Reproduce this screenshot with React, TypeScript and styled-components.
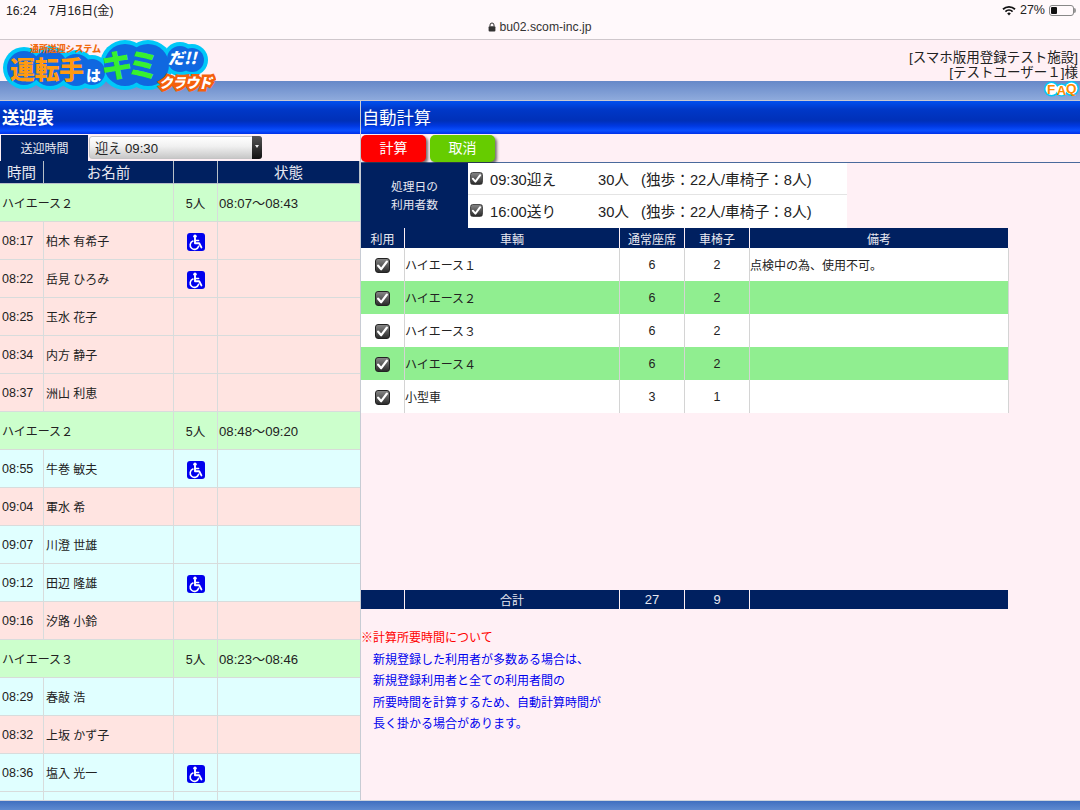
import React from "react";
import styled, { createGlobalStyle } from "styled-components";

const FONT = `"Liberation Sans", "Noto Sans CJK JP", sans-serif`;

const GlobalStyle = createGlobalStyle`
  html, body {
    margin: 0;
    padding: 0;
    background: #fff0f5;
  }
  * {
    box-sizing: border-box;
  }
`;

type Row =
  | { kind: "group"; name: string; count: string; range: string }
  | { kind: "person"; time: string; name: string; chair?: boolean; tone: "pink" | "cyan" };

const ROWS: Row[] = [
  { kind: "group", name: "ハイエース２", count: "5人", range: "08:07～08:43" },
  { kind: "person", time: "08:17", name: "柏木 有希子", chair: true, tone: "pink" },
  { kind: "person", time: "08:22", name: "岳見 ひろみ", chair: true, tone: "pink" },
  { kind: "person", time: "08:25", name: "玉水 花子", tone: "pink" },
  { kind: "person", time: "08:34", name: "内方 静子", tone: "pink" },
  { kind: "person", time: "08:37", name: "洲山 利恵", tone: "pink" },
  { kind: "group", name: "ハイエース２", count: "5人", range: "08:48～09:20" },
  { kind: "person", time: "08:55", name: "牛巻 敏夫", chair: true, tone: "cyan" },
  { kind: "person", time: "09:04", name: "軍水 希", tone: "pink" },
  { kind: "person", time: "09:07", name: "川澄 世雄", tone: "cyan" },
  { kind: "person", time: "09:12", name: "田辺 隆雄", chair: true, tone: "cyan" },
  { kind: "person", time: "09:16", name: "汐路 小鈴", tone: "pink" },
  { kind: "group", name: "ハイエース３", count: "5人", range: "08:23～08:46" },
  { kind: "person", time: "08:29", name: "春敲 浩", tone: "cyan" },
  { kind: "person", time: "08:32", name: "上坂 かず子", tone: "pink" },
  { kind: "person", time: "08:36", name: "塩入 光一", chair: true, tone: "cyan" },
  { kind: "person", time: "", name: "", tone: "cyan" },
];

const CARS = [
  { name: "ハイエース１", seats: 6, chairs: 2, note: "点検中の為、使用不可。", green: false },
  { name: "ハイエース２", seats: 6, chairs: 2, note: "", green: true },
  { name: "ハイエース３", seats: 6, chairs: 2, note: "", green: false },
  { name: "ハイエース４", seats: 6, chairs: 2, note: "", green: true },
  { name: "小型車", seats: 3, chairs: 1, note: "", green: false },
];

const NOTES = [
  "新規登録した利用者が多数ある場合は、",
  "新規登録利用者と全ての利用者間の",
  "所要時間を計算するため、自動計算時間が",
  "長く掛かる場合があります。",
];

function WifiIcon() {
  return (
    <svg width="14" height="11" viewBox="0 0 14 11">
      <path d="M0.4 3.6a9.4 9.4 0 0 1 13.2 0l-1.2 1.3a7.7 7.7 0 0 0-10.8 0z" fill="#111" />
      <path d="M2.8 6a6 6 0 0 1 8.4 0l-1.2 1.3a4.3 4.3 0 0 0-6 0z" fill="#111" />
      <path d="M5.2 8.4a2.6 2.6 0 0 1 3.6 0L7 10.5z" fill="#111" />
    </svg>
  );
}

function ChairIcon() {
  return (
    <ChairBox>
      <svg width="18" height="18" viewBox="0 0 18 18">
        <rect width="18" height="18" rx="3" fill="#0000ee" />
        <circle cx="8" cy="3.2" r="1.7" fill="#fff" />
        <path d="M8 5v5.2h4.2l2.2 4.2" fill="none" stroke="#fff" strokeWidth="1.9" strokeLinecap="round" strokeLinejoin="round" />
        <path d="M8 7.6h3.6" fill="none" stroke="#fff" strokeWidth="1.5" strokeLinecap="round" />
        <path d="M5.9 8.1a4.3 4.3 0 1 0 5.7 5.2" fill="none" stroke="#fff" strokeWidth="1.6" strokeLinecap="round" />
      </svg>
    </ChairBox>
  );
}

function Logo() {
  const bumps: [number, number, number][] = [
    [22, 28, 21], [48, 28, 22], [74, 30, 20], [90, 32, 17], [123, 25, 25], [146, 25, 25], [178, 19, 17], [190, 20, 16],
  ];
  const t = { fontFamily: `"Noto Sans CJK JP", sans-serif`, fontWeight: 900 };
  return (
    <LogoWrap>
      <svg width="214" height="54" viewBox="0 0 214 54">
        {bumps.map(([x, y, r], i) => <circle key={i} cx={x} cy={y} r={r} fill="#00c8f8" />)}
        {bumps.map(([x, y, r], i) => <circle key={i} cx={x} cy={y} r={r - 4} fill="#1068e0" />)}
        <text x="28" y="12" fontSize="9" fill="#f06a10" style={t} textLength="71">通所送迎システム</text>
        <text x="8" y="39" fontSize="25" fill="#ff9a10" style={t} textLength="74">運転手</text>
        <text x="84" y="41" fontSize="15" fill="#fff" style={t}>は</text>
        <text x="99" y="37" fontSize="32" fill="#38f030" style={t} textLength="58">キミ</text>
        <text x="166" y="24" fontSize="16" fontStyle="italic" fill="#fff" style={t}>だ!!</text>
        <text x="157" y="48" fontSize="14" fontStyle="italic" fill="#fff" stroke="#f4600c" strokeWidth="5" paintOrder="stroke" style={t} textLength="53">クラウド</text>
      </svg>
    </LogoWrap>
  );
}

function FaqIcon() {
  return (
    <FaqWrap>
      <svg width="35" height="16" viewBox="0 0 35 16">
        <circle cx="7.5" cy="8" r="7.5" fill="#00c8f8" />
        <circle cx="17.5" cy="9" r="6.5" fill="#00c8f8" />
        <circle cx="27.5" cy="7.5" r="7.5" fill="#00c8f8" />
        <circle cx="7.5" cy="8" r="6" fill="#fff" />
        <circle cx="17.5" cy="9" r="5.2" fill="#fff" />
        <circle cx="27.5" cy="7.5" r="6" fill="#fff" />
        <text x="3" y="12.8" fontSize="13.5" fontWeight="700" fontFamily="Liberation Sans" fill="#ff8a00">F</text>
        <text x="12.8" y="14" fontSize="13" fontWeight="700" fontFamily="Liberation Sans" fill="#ff8a00">A</text>
        <text x="22" y="12.4" fontSize="13.5" fontWeight="700" fontFamily="Liberation Sans" fill="#ff8a00">Q</text>
      </svg>
    </FaqWrap>
  );
}

function Check() {
  return (
    <CheckBox>
      <svg width="13" height="13" viewBox="0 0 12 12">
        <path d="M2 6.2l2.8 3.2 5.2-7" fill="none" stroke="#fff" strokeWidth="2.1" strokeLinecap="round" strokeLinejoin="round" />
      </svg>
    </CheckBox>
  );
}

export default function App() {
  return (
    <Page>
      <GlobalStyle />
      <StatusBar>
        <StatusTop>
          <StatusText>
            <span>16:24</span>
            <span>7月16日(金)</span>
          </StatusText>
          <StatusRight>
            <WifiIcon />
            <span>27%</span>
            <Battery>
              <BatteryLevel />
            </Battery>
          </StatusRight>
        </StatusTop>
        <Url>
          <svg width="8" height="10" viewBox="0 0 8 10">
            <path d="M2 4.4V3a2 2 0 0 1 4 0v1.4" fill="none" stroke="#333" strokeWidth="1" />
            <rect x="0.6" y="4.2" width="6.8" height="5.4" rx="1" fill="#333" />
          </svg>
          <span>bu02.scom-inc.jp</span>
        </Url>
      </StatusBar>
      <Header>
        <UserInfo>
          <div>[スマホ版用登録テスト施設]</div>
          <div>[テストユーザー１]様</div>
        </UserInfo>
      </Header>
      <Band>
        <FaqIcon />
      </Band>
      <Logo />
      <Columns>
        <LeftPane>
          <TitleBar $bold>送迎表</TitleBar>
          <SelectRow>
            <SelectLabel>送迎時間</SelectLabel>
            <SelectBox>
              <span>迎え 09:30</span>
              <SelectArrow />
            </SelectBox>
          </SelectRow>
          <ListHead>
            <HeadCell>時間</HeadCell>
            <HeadCell>お名前</HeadCell>
            <HeadCell />
            <HeadCell>状態</HeadCell>
          </ListHead>
          <ListBody>
            {ROWS.map((row, i) =>
              row.kind === "group" ? (
                <GroupRow key={i}>
                  <GroupName>{row.name}</GroupName>
                  <MidCell>{row.count}</MidCell>
                  <StateCell>{row.range}</StateCell>
                </GroupRow>
              ) : (
                <PersonRow key={i} $tone={row.tone}>
                  <TimeCell>{row.time}</TimeCell>
                  <NameCell>{row.name}</NameCell>
                  <MidCell>{row.chair && <ChairIcon />}</MidCell>
                  <StateCell />
                </PersonRow>
              )
            )}
          </ListBody>
        </LeftPane>
        <RightPane>
          <TitleBar>自動計算</TitleBar>
          <ButtonRow>
            <ActionButton $color="#ff0000">計算</ActionButton>
            <ActionButton $color="#66cc00">取消</ActionButton>
          </ButtonRow>
          <InfoTable>
            <InfoLabel>
              処理日の
              <br />
              利用者数
            </InfoLabel>
            <InfoRows>
              <InfoRow>
                <SmallCheck>
                  <Check />
                </SmallCheck>
                <InfoTime>09:30迎え</InfoTime>
                <InfoCount>30人</InfoCount>
                <span>(独歩：22人/車椅子：8人)</span>
              </InfoRow>
              <InfoRow>
                <SmallCheck>
                  <Check />
                </SmallCheck>
                <InfoTime>16:00送り</InfoTime>
                <InfoCount>30人</InfoCount>
                <span>(独歩：22人/車椅子：8人)</span>
              </InfoRow>
            </InfoRows>
          </InfoTable>
          <CarGrid>
            <CarHead>利用</CarHead>
            <CarHead>車輌</CarHead>
            <CarHead>通常座席</CarHead>
            <CarHead>車椅子</CarHead>
            <CarHead>備考</CarHead>
          </CarGrid>
          {CARS.map((car) => (
            <CarGrid key={car.name}>
              <CarCell $green={car.green} $center>
                <CarCheck>
                  <Check />
                </CarCheck>
              </CarCell>
              <CarCell $green={car.green}>{car.name}</CarCell>
              <CarCell $green={car.green} $center $large>
                {car.seats}
              </CarCell>
              <CarCell $green={car.green} $center $large>
                {car.chairs}
              </CarCell>
              <CarCell $green={car.green}>{car.note}</CarCell>
            </CarGrid>
          ))}
          <TotalRow>
            <TotalCell />
            <TotalCell>合計</TotalCell>
            <TotalCell $large>27</TotalCell>
            <TotalCell $large>9</TotalCell>
            <TotalCell />
          </TotalRow>
          <Notes>
            <RedNote>※計算所要時間について</RedNote>
            {NOTES.map((n) => (
              <BlueNote key={n}>{n}</BlueNote>
            ))}
          </Notes>
        </RightPane>
      </Columns>
      <BottomBar />
    </Page>
  );
}

const Page = styled.div`
  display: flex;
  flex-direction: column;
  width: 1080px;
  height: 810px;
  overflow: hidden;
  position: relative;
  background: #fff0f5;
  font-family: ${FONT};
  color: #222;
`;
const StatusBar = styled.div`
  flex: none;
  height: 40px;
  padding: 3px 6px 0;
  background: #fff9fb;
  border-bottom: 1px solid #cfc8cc;
  font-size: 12.5px;
`;
const StatusTop = styled.div`
  display: flex;
  justify-content: space-between;
  align-items: center;
  height: 14px;
`;
const StatusText = styled.div`
  display: flex;
  align-items: baseline;
  gap: 12px;
  font-size: 12.2px;
  line-height: 14px;
  color: #222;
  margin-top: 1px;
`;
const StatusRight = styled.div`
  display: flex;
  align-items: center;
  gap: 4px;
`;
const Battery = styled.div`
  position: relative;
  width: 25px;
  height: 11px;
  padding: 1px;
  border: 1px solid #888;
  border-radius: 3px;
  &::after {
    content: "";
    position: absolute;
    right: -3px;
    top: 2px;
    width: 2px;
    height: 5px;
    border-radius: 0 2px 2px 0;
    background: #999;
  }
`;
const BatteryLevel = styled.div`
  width: 6px;
  height: 100%;
  background: #111;
  border-radius: 1px;
`;
const Url = styled.div`
  display: flex;
  justify-content: center;
  align-items: center;
  gap: 3px;
  margin-top: 3px;
  font-size: 12.2px;
  color: #333;
`;
const Header = styled.div`
  display: flex;
  justify-content: flex-end;
  align-items: flex-end;
  flex: none;
  height: 41px;
  padding: 0 2px 1px 0;
`;
const LogoWrap = styled.div`
  position: absolute;
  z-index: 2;
  left: 2px;
  top: 40px;
  line-height: 0;
`;
const UserInfo = styled.div`
  font-size: 13.5px;
  line-height: 15px;
  text-align: right;
  color: #222;
`;
const Band = styled.div`
  position: relative;
  height: 20px;
  flex: none;
  background: linear-gradient(#6688c8, #8eaadc);
  border-bottom: 1px solid #c8c8d0;
`;
const FaqWrap = styled.div`
  position: absolute;
  right: 1px;
  top: 0;
  line-height: 0;
`;
const Columns = styled.div`
  display: flex;
  flex: 1;
  min-height: 0;
`;
const LeftPane = styled.div`
  display: flex;
  flex-direction: column;
  width: 360px;
  flex: none;
  overflow: hidden;
`;
const RightPane = styled.div`
  display: flex;
  flex-direction: column;
  flex: 1;
  min-width: 0;
  border-left: 1px solid #c8ccd4;
`;
const TitleBar = styled.div<{ $bold?: boolean }>`
  display: flex;
  align-items: center;
  flex: none;
  height: 33px;
  padding: 0 0 2px ${(p) => (p.$bold ? "2px" : "1px")};
  font-size: 17.3px;
  font-weight: ${(p) => (p.$bold ? 700 : 400)};
  color: #fff;
  background: linear-gradient(#0050f0 0%, #0038c8 25%, #0030b8 60%, #0038e0 75%, #0a50ff 90%, #0030e8 100%);
`;
const SelectRow = styled.div`
  display: flex;
  flex: none;
  align-items: center;
  gap: 1px;
  height: 27px;
  padding-left: 1px;
`;
const SelectLabel = styled.div`
  display: flex;
  align-items: center;
  justify-content: center;
  width: 87px;
  height: 26px;
  font-size: 12px;
  color: #e8e8f0;
  background: #002060;
`;
const SelectBox = styled.div`
  position: relative;
  display: flex;
  align-items: center;
  width: 173px;
  height: 23px;
  padding-left: 5px;
  border: 1px solid #c4c4c4;
  border-radius: 3px;
  font-size: 13.2px;
  color: #222;
  background: linear-gradient(#ffffff, #f0f0f0 45%, #c8c8c8);
`;
const SelectArrow = styled.div`
  position: absolute;
  right: -1px;
  top: -1px;
  bottom: -1px;
  width: 10px;
  border-radius: 0 3px 3px 0;
  background: linear-gradient(#555, #111);
  &::after {
    content: "";
    position: absolute;
    left: 3px;
    top: 9px;
    border-left: 2px solid transparent;
    border-right: 2px solid transparent;
    border-top: 3px solid #eee;
  }
`;
const LIST_COLS = "44px 130px 44px 1fr";
const ListHead = styled.div`
  display: grid;
  flex: none;
  grid-template-columns: ${LIST_COLS};
  height: 23px;
  background: #b8c0c8;
`;
const HeadCell = styled.div`
  display: flex;
  align-items: center;
  justify-content: center;
  margin-right: 1px;
  height: 22px;
  padding-bottom: 2px;
  font-size: 14.5px;
  color: #e8e8f0;
  background: #002060;
`;
const ListBody = styled.div`
  display: flex;
  flex-direction: column;
  flex: none;
`;
const GroupRow = styled.div`
  display: grid;
  flex: none;
  grid-template-columns: 174px 44px 1fr;
  height: 38px;
  font-size: 12.5px;
  background: #ccffcc;
  border-bottom: 1px solid #d8dcd8;
`;
const PersonRow = styled.div<{ $tone: "pink" | "cyan" }>`
  display: grid;
  flex: none;
  grid-template-columns: ${LIST_COLS};
  height: 38px;
  font-size: 12.5px;
  background: ${(p) => (p.$tone === "pink" ? "#ffe4e1" : "#e0ffff")};
  border-bottom: 1px solid #d8dcdc;
`;
const GroupName = styled.div`
  display: flex;
  align-items: center;
  padding-left: 2px;
  font-size: 12px;
  border-right: 1px solid #d8dcd8;
`;
const TimeCell = styled.div`
  display: flex;
  align-items: center;
  padding-left: 2px;
  border-right: 1px solid #d8dcdc;
`;
const NameCell = styled.div`
  display: flex;
  align-items: center;
  padding-left: 2px;
  font-size: 12px;
  border-right: 1px solid #d8dcdc;
`;
const MidCell = styled.div`
  display: flex;
  align-items: center;
  justify-content: center;
  border-right: 1px solid #d8dcdc;
`;
const StateCell = styled.div`
  display: flex;
  align-items: center;
  padding-left: 1px;
  font-size: 13.2px;
`;
const ChairBox = styled.div`
  display: flex;
  margin-top: 2px;
  line-height: 0;
`;
const ButtonRow = styled.div`
  display: flex;
  flex: none;
  gap: 4px;
  height: 29px;
  padding-top: 1px;
  border-bottom: 1px solid #4a6a9c;
`;
const ActionButton = styled.button<{ $color: string }>`
  width: 65px;
  height: 27px;
  padding: 0 0 3px;
  border: none;
  border-radius: 5px;
  font-family: ${FONT};
  font-size: 14px;
  color: #fff;
  background: ${(p) => p.$color};
  box-shadow: 2px 2px 3px rgba(0, 0, 0, 0.55);
`;
const InfoTable = styled.div`
  display: flex;
  flex: none;
  width: 486px;
  height: 65px;
`;
const InfoLabel = styled.div`
  display: flex;
  align-items: center;
  justify-content: center;
  width: 107px;
  font-size: 11.7px;
  line-height: 18px;
  text-align: center;
  color: #e8e8f0;
  background: #002060;
`;
const InfoRows = styled.div`
  display: flex;
  flex-direction: column;
  flex: 1;
  background: #fff;
`;
const InfoRow = styled.div`
  display: flex;
  align-items: center;
  flex: 1;
  padding-left: 1px;
  font-size: 14.7px;
  border-bottom: 1px solid #e4e4e4;
  &:last-child {
    border-bottom: none;
    padding-bottom: 2px;
  }
`;
const SmallCheck = styled.div`
  display: flex;
  margin-right: 6px;
  transform: scale(0.85);
`;
const InfoTime = styled.span`
  width: 108px;
`;
const InfoCount = styled.span`
  width: 43px;
`;
const CAR_COLS = "44px 215px 65px 65px 259px";
const CarGrid = styled.div`
  display: grid;
  flex: none;
  grid-template-columns: ${CAR_COLS};
  width: 648px;
`;
const CarHead = styled.div`
  display: flex;
  align-items: center;
  justify-content: center;
  height: 20px;
  margin-right: 1px;
  font-size: 12px;
  color: #e8e8f0;
  background: #002060;
`;
const CarCell = styled.div<{ $green: boolean; $center?: boolean; $large?: boolean }>`
  display: flex;
  align-items: center;
  justify-content: ${(p) => (p.$center ? "center" : "flex-start")};
  height: 33px;
  font-size: ${(p) => (p.$large ? "12.5px" : "12px")};
  background: ${(p) => (p.$green ? "#90ee90" : "#fff")};
  border-right: 1px solid #d4d4d4;
`;
const CarCheck = styled.div`
  display: flex;
  margin: 1px 1px 0 0;
`;
const CheckBox = styled.div`
  display: flex;
  align-items: center;
  justify-content: center;
  width: 15px;
  height: 15px;
  border-radius: 3px;
  border: 1px solid #222;
  background: linear-gradient(#858585, #2c2c2c);
`;
const TotalRow = styled.div`
  display: grid;
  flex: none;
  grid-template-columns: ${CAR_COLS};
  width: 648px;
  height: 19px;
  margin-top: 177px;
`;
const TotalCell = styled.div<{ $large?: boolean }>`
  display: flex;
  align-items: center;
  justify-content: center;
  margin-right: 1px;
  font-size: ${(p) => (p.$large ? "13px" : "12px")};
  color: #e8e8f0;
  background: #002060;
`;
const Notes = styled.div`
  display: flex;
  flex-direction: column;
  padding-top: 19px;
  font-size: 12px;
  line-height: 21.5px;
`;
const RedNote = styled.div`
  color: #ff0000;
`;
const BlueNote = styled.div`
  padding-left: 12px;
  color: #0000ee;
`;
const BottomBar = styled.div`
  flex: none;
  height: 10px;
  border-top: 1px solid #d0d4dc;
  background: linear-gradient(#3f6fc0, #5f8ad0);
`;
